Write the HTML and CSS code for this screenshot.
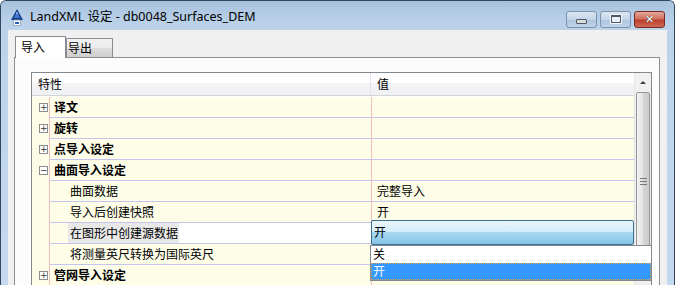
FILE: index.html
```
<!DOCTYPE html>
<html>
<head>
<meta charset="utf-8">
<link rel="stylesheet" href="styles.css">
</head>
<body>
<div class="window">
  <div class="titlebar">
    <svg class="appicon" width="14" height="17" viewBox="0 0 14 17">
      <polygon points="7,0 13,11 1,11" fill="#163f8a"/>
      <polygon points="7,2.5 10,9 4,9" fill="#3f78cf"/>
      <polygon points="7,2.5 8.2,5 5.8,5" fill="#9cc0f0"/>
      <rect x="3.5" y="11" width="7" height="5.5" fill="#fff" stroke="#8494ad" stroke-width="0.7"/>
      <rect x="5" y="13" width="4" height="2" fill="#2b64c0"/>
    </svg>
    <span class="title">LandXML 设定 - db0048_Surfaces_DEM</span>
    <div class="capbtns">
      <div class="capbtn"><span class="minbar"></span></div>
      <div class="capbtn"><span class="maxbox"></span></div>
      <div class="capbtn close"><span class="xmark">✕</span></div>
    </div>
  </div>
  <div class="frame">
    <div class="client">
      <div class="tabs">
        <div class="tab active">导入</div>
        <div class="tab">导出</div>
      </div>
      <div class="panel">
        <div class="grid">
          <div class="rows">
            <div class="head">
              <div class="hcol hname">特性</div>
              <div class="hcol hval">值</div>
            </div>
            <div class="spacer"></div>
            <div class="row"><div class="gutter"><span class="box">+</span></div><div class="name group">译文</div><div class="val"></div></div>
            <div class="row"><div class="gutter"><span class="box">+</span></div><div class="name group">旋转</div><div class="val"></div></div>
            <div class="row"><div class="gutter"><span class="box">+</span></div><div class="name group">点导入设定</div><div class="val"></div></div>
            <div class="row"><div class="gutter"><span class="box">−</span></div><div class="name group">曲面导入设定</div><div class="val"></div></div>
            <div class="row"><div class="gutter"></div><div class="name child">曲面数据</div><div class="val">完整导入</div></div>
            <div class="row"><div class="gutter"></div><div class="name child">导入后创建快照</div><div class="val">开</div></div>
            <div class="row editing"><div class="gutter"></div><div class="name child"><span class="sel">在图形中创建源数据</span></div>
              <div class="val">
                <div class="combo">开</div>
                <div class="droplist">
                  <div class="item">关</div>
                  <div class="item hot">开</div>
                </div>
              </div>
            </div>
            <div class="row"><div class="gutter"></div><div class="name child">将测量英尺转换为国际英尺</div><div class="val"></div></div>
            <div class="row"><div class="gutter"><span class="box">+</span></div><div class="name group">管网导入设定</div><div class="val"></div></div>
          </div>
          <div class="vscroll">
            <div class="upbtn"><span class="arrow"></span></div>
            <div class="thumb"><span class="grip"></span></div>
          </div>
        </div>
      </div>
    </div>
  </div>
</div>
</body>
</html>
```
FILE: styles.css
```
body {
  margin: 0;
  background: #fff;
}
.window {
  width: 673px;
  height: 284px;
  border: 1px solid #34475f;
  border-bottom: none;
  border-radius: 6px 6px 0 0;
  background: linear-gradient(180deg, #a9c3df 0, #bcd3ea 30px, #c4d8ee 100%);
  overflow: hidden;
  font-family: "Noto Sans CJK SC", sans-serif;
  font-size: 12px;
  color: #000;
}
.titlebar {
  height: 29px;
  display: flex;
  align-items: center;
  padding-left: 9px;
  background: linear-gradient(180deg, #a7c1dd 0, #b7cfe8 60%, #bcd3ea 100%);
}
.appicon {
  margin-top: 4px;
}
.title {
  margin-left: 6px;
  margin-top: 3px;
  font-family: "Noto Sans", "Noto Sans CJK SC", sans-serif;
  font-size: 12.5px;
  line-height: 18px;
}
.capbtns {
  margin-left: auto;
  margin-right: 9px;
  margin-top: 7px;
  display: flex;
  gap: 3px;
}
.capbtn {
  width: 29px;
  height: 15px;
  border: 1px solid #7b92ad;
  border-radius: 3px;
  background: linear-gradient(180deg, #dbe6f2 0, #c4d5e8 50%, #aec5de 51%, #bfd3e9 100%);
  display: flex;
  align-items: center;
  justify-content: center;
}
.minbar {
  width: 9px;
  height: 3px;
  margin-top: 4px;
  background: #dcdcdc;
  border: 1px solid #4e5866;
  border-radius: 1px;
}
.maxbox {
  width: 8px;
  height: 5px;
  border: 1px solid #4e5866;
  border-top-width: 2px;
  background: #e9eef4;
  outline: 1px solid #f4f4f4;
}
.capbtn.close {
  border-color: #7a2a25;
  background: linear-gradient(180deg, #e7a89d 0, #d0705f 45%, #bb3f2c 55%, #cf6a55 100%);
}
.xmark {
  color: #fff;
  font-family: "DejaVu Sans", sans-serif;
  font-weight: bold;
  font-size: 11px;
  line-height: 11px;
  text-shadow: 0 0 1px #444, 0 0 1px #444;
}
.frame {
  height: 255px;
  padding: 0 7px;
  display: flex;
}
.client {
  flex: 1;
  background: #f0f0f0;
  overflow: hidden;
}
.tabs {
  display: flex;
  align-items: flex-end;
  padding: 6px 0 0 7px;
  height: 21px;
  position: relative;
  z-index: 1;
}
.tab {
  width: 44px;
  height: 18px;
  padding-left: 1px;
  border: 1px solid #898c95;
  border-bottom: none;
  background: linear-gradient(180deg, #f2f2f2 0, #ebebeb 50%, #dddddd 51%, #cfcfcf 100%);
  line-height: 17px;
  font-size: 12px;
}
.tab.active {
  width: 44px;
  height: 21px;
  padding-left: 5px;
  margin-bottom: -1px;
  background: #fff;
  line-height: 19px;
  border-color: #898c95;
}
.panel {
  margin: 0 7px 0 6px;
  border: 1px solid #898c95;
  background: #fcfcfc;
  padding: 14px 7px 0 16px;
  height: 240px;
}
.grid {
  border: 1px solid #828790;
  background: #fff;
  display: flex;
  height: 230px;
}
.rows {
  width: 603px;
}
.head {
  display: flex;
  height: 22px;
  border-bottom: 1px solid #d5d5d5;
  background: linear-gradient(180deg, #fff 0, #fff 45%, #f4f5f7 46%, #eef0f3 100%);
}
.hcol {
  line-height: 21px;
  padding-left: 6px;
}
.hname {
  width: 332px;
  border-right: 1px solid #e2e3ea;
}
.hval {
  flex: 1;
}
.spacer {
  height: 1px;
}
.row {
  display: flex;
  height: 21px;
}
.gutter {
  width: 17px;
  background: #fefee8;
  display: flex;
  align-items: center;
  padding-left: 7px;
  box-sizing: border-box;
}
.box {
  width: 7px;
  height: 7px;
  border: 1px solid #8c8c8c;
  background: #fff;
  font-family: "DejaVu Sans", sans-serif;
  font-size: 9px;
  line-height: 7px;
  text-align: center;
  color: #333;
  margin-top: -1px;
}
.name, .val {
  background: #fefee8;
  border-left: 1px solid #f4bcbc;
  border-bottom: 1px solid #c4c4ef;
  line-height: 20px;
  white-space: nowrap;
}
.name {
  width: 321px;
}
.val {
  flex: 1;
  padding-left: 5px;
  position: relative;
}
.group {
  font-weight: bold;
  padding-left: 4px;
  width: 317px;
}
.child {
  padding-left: 20px;
  width: 301px;
}
.editing .child {
  background: linear-gradient(90deg, #fefee8 0, #fefee8 18px, #fff 18px);
}
.editing .val {
  background: #fff;
}
.sel {
  display: inline-block;
  background: #e8e8e8;
  padding: 0 1px 0 2px;
  margin-left: -2px;
}
.combo {
  position: absolute;
  left: -1px;
  top: -3px;
  width: 259px;
  height: 23px;
  padding-left: 2px;
  border: 1px solid #3c6e95;
  border-radius: 2px;
  background: linear-gradient(180deg, #e9f5fc 0, #d7edf9 45%, #a8d8f0 50%, #86c4e6 100%);
  line-height: 22px;
  z-index: 2;
}
.droplist {
  position: absolute;
  left: -2px;
  top: 22px;
  width: 280px;
  height: 34px;
  border: 1px solid #828790;
  background: #fff;
  z-index: 3;
}
.item {
  height: 17px;
  line-height: 16px;
  padding-left: 2px;
}
.item.hot {
  background: #3399ff;
  color: #fff;
  outline: 1px dotted #e0a060;
  outline-offset: -1px;
}
.vscroll {
  width: 17px;
  background: #f0f0f0;
  border-left: 1px solid #e6e6e6;
  box-sizing: border-box;
}
.upbtn {
  height: 19px;
  display: flex;
  justify-content: center;
  align-items: center;
}
.arrow {
  width: 0;
  height: 0;
  border-left: 3px solid transparent;
  border-right: 3px solid transparent;
  border-bottom: 3px solid #3c3c3c;
}
.thumb {
  margin: 0 1px 0 1px;
  height: 176px;
  border: 1px solid #979797;
  border-radius: 2px;
  background: linear-gradient(90deg, #f2f2f2 0, #e4e4e4 50%, #d6d6d6 51%, #cbcbcb 100%);
  display: flex;
  justify-content: center;
  padding-top: 85px;
  box-sizing: border-box;
}
.grip {
  width: 7px;
  height: 5px;
  border-top: 1px solid #777;
  border-bottom: 1px solid #777;
  background: linear-gradient(180deg, transparent 0 2px, #777 2px 3px, transparent 3px);
}
```
